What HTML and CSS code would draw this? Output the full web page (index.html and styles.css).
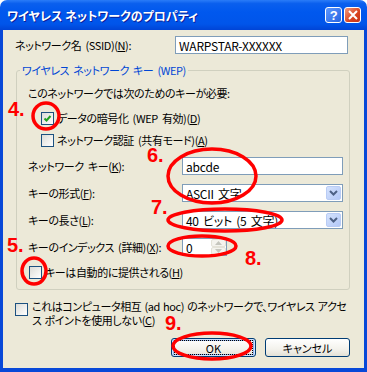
FILE: index.html
```html
<!DOCTYPE html>
<html>
<head>
    <title>ワイヤレス ネットワークのプロパティ</title>
    <meta charset="UTF-8">
    <link rel="stylesheet" href="styles.css">
</head>
<body>
    <div class="window">
        <div class="titlebar">
            <span class="title">ワイヤレス ネットワークのプロパティ</span>
            <div class="tb-buttons">
                <span class="tb-btn help">?</span>
                <span class="tb-btn close">
                    <svg width="10" height="10" viewBox="0 0 10 10"><path d="M1 1 L9 9 M9 1 L1 9" stroke="#fff" stroke-width="2"/></svg>
                </span>
            </div>
        </div>

        <div class="content">
            <div class="ssid-row">
                <span>ネットワーク名 (SSID)(<u>N</u>):</span>
                <div class="textbox">WARPSTAR-XXXXXX</div>
            </div>

            <fieldset class="group">
                <legend>ワイヤレス ネットワーク キー (WEP)</legend>
                <div class="intro">このネットワークでは次のためのキーが必要:</div>
                <div class="check indent first">
                    <span class="cb">
                        <svg width="11" height="11" viewBox="0 0 11 11"><path d="M2.5 5.5 L4.5 7.5 L8.5 3" stroke="#21A121" stroke-width="2" fill="none"/></svg>
                    </span>
                    <span>データの暗号化 (WEP 有効)(<u>D</u>)</span>
                </div>
                <div class="check indent second">
                    <span class="cb"></span>
                    <span>ネットワーク認証 (共有モード)(<u>A</u>)</span>
                </div>

                <div class="field">
                    <span>ネットワーク キー(<u>K</u>):</span>
                    <div class="textbox">abcde</div>
                </div>
                <div class="field">
                    <span>キーの形式(<u>F</u>):</span>
                    <div class="combo">
                        <span>ASCII 文字</span>
                        <span class="drop"><svg width="9" height="6" viewBox="0 0 9 6"><path d="M1 1 L4.5 4.5 L8 1" stroke="#4D6185" stroke-width="2" fill="none"/></svg></span>
                    </div>
                </div>
                <div class="field">
                    <span>キーの長さ(<u>L</u>):</span>
                    <div class="combo">
                        <span>40 ビット (5 文字)</span>
                        <span class="drop"><svg width="9" height="6" viewBox="0 0 9 6"><path d="M1 1 L4.5 4.5 L8 1" stroke="#4D6185" stroke-width="2" fill="none"/></svg></span>
                    </div>
                </div>
                <div class="field">
                    <span>キーのインデックス (詳細)(<u>X</u>):</span>
                    <div class="spinner">
                        <span>0</span>
                        <div class="spin-btns">
                            <span class="spin-btn"><svg width="7" height="4" viewBox="0 0 7 4"><path d="M0 4 L3.5 0 L7 4 Z" fill="#C5C5BD"/></svg></span>
                            <span class="spin-btn"><svg width="7" height="4" viewBox="0 0 7 4"><path d="M0 0 L3.5 4 L7 0 Z" fill="#C5C5BD"/></svg></span>
                        </div>
                    </div>
                </div>
                <div class="check auto">
                    <span class="cb"></span>
                    <span>キーは自動的に提供される(<u>H</u>)</span>
                </div>
            </fieldset>

            <div class="check adhoc">
                <span class="cb"></span>
                <span class="adhoc-text">これはコンピュータ相互 (ad hoc) のネットワークで、ワイヤレス アクセ<br>ス ポイントを使用しない(<u>C</u>)</span>
            </div>

            <div class="buttons">
                <button class="btn default"><span class="focus">OK</span></button>
                <button class="btn">キャンセル</button>
            </div>
        </div>

        <!-- 手書きの赤いマーク -->
        <svg class="marks" width="367" height="372" viewBox="0 0 367 372">
            <g fill="none" stroke="#FF0000" stroke-width="3.5">
                <ellipse cx="46" cy="116" rx="13" ry="13"/>
                <ellipse cx="212" cy="176" rx="44" ry="27"/>
                <ellipse cx="225" cy="220" rx="57" ry="11"/>
                <ellipse cx="202" cy="246" rx="34" ry="10"/>
                <ellipse cx="34" cy="271" rx="12" ry="13"/>
                <ellipse cx="212" cy="346" rx="39" ry="13"/>
            </g>
            <g class="num">
                <text x="8" y="116">4.</text>
                <text x="147" y="162">6.</text>
                <text x="151" y="214">7.</text>
                <text x="7" y="252">5.</text>
                <text x="245" y="265">8.</text>
                <text x="165" y="330">9.</text>
            </g>
        </svg>
    </div>
</body>
</html>
```

FILE: styles.css
```css
body {
    margin: 0;
    font-family: "Noto Sans CJK JP", "Liberation Sans", sans-serif;
    font-size: 11px;
    letter-spacing: -0.4px;
    word-spacing: 2px;
    font-feature-settings: "palt";
    color: #000;
}
.window {
    position: relative;
    width: 367px;
    height: 372px;
    display: flex;
    flex-direction: column;
}
.titlebar {
    height: 30px;
    display: flex;
    align-items: center;
    padding: 0 6px 0 7px;
    background: linear-gradient(#2A7CF8 0%, #0A5FEE 12%, #0058EE 40%, #0055EA 80%, #0044D6 100%);
    border-radius: 7px 7px 0 0;
}
.title {
    flex: 1;
    color: #fff;
    font-weight: bold;
    font-size: 12px;
    letter-spacing: 0;
    word-spacing: 0;
    text-shadow: 1px 1px #0A1E9A;
}
.tb-buttons {
    display: flex;
    gap: 2px;
}
.tb-btn {
    width: 15px;
    height: 14px;
    border: 1px solid #fff;
    border-radius: 3px;
    display: flex;
    align-items: center;
    justify-content: center;
    color: #fff;
    font-family: "Liberation Sans", sans-serif;
    font-weight: bold;
    font-size: 13px;
}
.help {
    background: linear-gradient(135deg, #5E98FF, #2663E0);
}
.close {
    background: linear-gradient(135deg, #F09A80, #D9431E 60%, #C4341A);
}
.content {
    flex: 1;
    background: #ECE9D8;
    border: 3px solid #0848D8;
    border-top: 0;
    border-bottom-width: 4px;
    padding: 6px 14px 0 12px;
}
.ssid-row {
    display: grid;
    grid-template-columns: 160px 173px;
    align-items: center;
    height: 18px;
}
.textbox {
    height: 18px;
    box-sizing: border-box;
    border: 1px solid #7F9DB9;
    background: #fff;
    padding-left: 3px;
    display: flex;
    align-items: center;
    font-size: 12px;
    letter-spacing: -0.2px;
}
.group {
    margin: 8px 0 0 1px;
    border: 1px solid #D0D0BF;
    border-radius: 3px;
    padding: 0 6px 9px 11px;
}
.group legend {
    color: #0046D5;
    line-height: 16px;
    padding: 0 2px;
    margin-left: -8px;
}
.intro {
    margin-top: 7px;
    line-height: 16px;
}
.check {
    display: flex;
    align-items: center;
    height: 16px;
}
.check.indent {
    padding-left: 13px;
}
.check.first {
    margin-top: 9px;
}
.check.second {
    margin-top: 6px;
}
.cb {
    width: 11px;
    height: 11px;
    border: 1px solid #1C5180;
    background: linear-gradient(135deg, #DCDCD7, #FFFFFF);
    margin-right: 3px;
    display: flex;
    flex-shrink: 0;
}
.field {
    display: grid;
    grid-template-columns: 154px 161px;
    align-items: center;
    height: 18px;
    margin-top: 9px;
}
.combo {
    height: 18px;
    box-sizing: border-box;
    border: 1px solid #7F9DB9;
    background: #fff;
    padding-left: 3px;
    display: flex;
    align-items: center;
    justify-content: space-between;
    font-size: 12px;
    letter-spacing: -0.3px;
}
.drop {
    width: 15px;
    height: 14px;
    margin-right: 1px;
    border: 1px solid #B9CCF5;
    border-radius: 2px;
    box-sizing: border-box;
    background: linear-gradient(135deg, #D4E2FD, #B3C8F7);
    display: flex;
    align-items: center;
    justify-content: center;
}
.spinner {
    width: 45px;
    height: 18px;
    box-sizing: border-box;
    border: 1px solid #7F9DB9;
    background: #fff;
    padding-left: 3px;
    display: flex;
    align-items: center;
    justify-content: space-between;
    font-size: 12px;
}
.spin-btns {
    display: flex;
    flex-direction: column;
    height: 16px;
    width: 15px;
}
.spin-btn {
    flex: 1;
    border: 1px solid #E4E2D8;
    border-radius: 2px;
    background: #F4F3EE;
    display: flex;
    align-items: center;
    justify-content: center;
}
.check.auto {
    margin-top: 8px;
    padding-left: 1px;
}
.check.adhoc {
    align-items: flex-start;
    height: auto;
    margin-top: 9px;
}
.check.adhoc .cb {
    margin-top: 4px;
    margin-right: 4px;
}
.adhoc-text {
    line-height: 14px;
    white-space: nowrap;
    word-spacing: 1px;
}
.buttons {
    display: flex;
    justify-content: flex-end;
    gap: 9px;
    margin-top: 11px;
}
.btn {
    width: 85px;
    height: 19px;
    border: 1px solid #003C74;
    border-radius: 3px;
    background: linear-gradient(#FFFFFF, #F3F2EC 60%, #E3E1D6);
    font-family: inherit;
    font-size: 11px;
    font-feature-settings: "palt";
    padding: 0;
    display: flex;
    align-items: center;
    justify-content: center;
}
.btn.default {
    box-shadow: inset 0 0 0 1px #CEE2FC, inset 0 0 0 2px #8DB1EE;
}
.focus {
    width: 77px;
    height: 13px;
    border: 1px dotted #000;
    display: flex;
    align-items: center;
    justify-content: center;
}
.marks {
    position: absolute;
    left: 0;
    top: 0;
    pointer-events: none;
}
.num {
    font-family: "Liberation Sans", sans-serif;
    font-weight: bold;
    font-size: 20px;
    letter-spacing: 0;
    fill: #FF0000;
}
```
